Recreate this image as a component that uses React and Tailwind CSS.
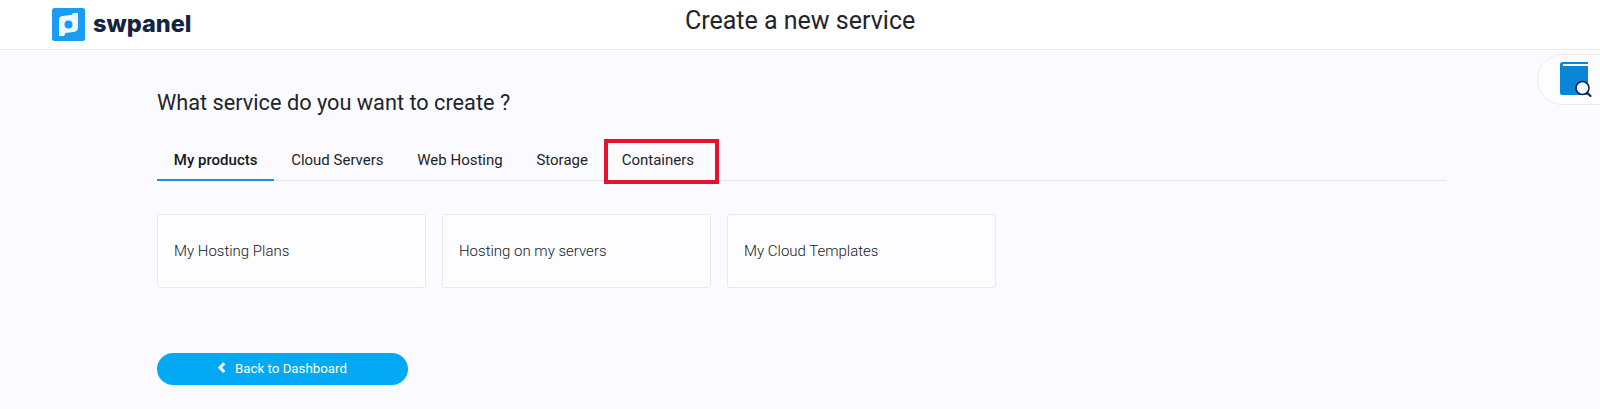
import React from "react";

const tabs = ["My products", "Cloud Servers", "Web Hosting", "Storage", "Containers"];
const cards = ["My Hosting Plans", "Hosting on my servers", "My Cloud Templates"];

const Logo = () => (
  <svg width="33" height="33" viewBox="0 0 33 33">
    <rect width="33" height="33" rx="2.5" fill="#1a9cf5" />
    <path d="M7 12 Q7 8.5 10.5 8 L20 6.8 L21 5 L26 5 L26 19 Q26 23.5 21.5 24 L13.5 25 L12 28 L8 28 Q7 28 7 26.5 Z" fill="#eef7fe" />
    <circle cx="16.5" cy="16.5" r="4" fill="#1a9cf5" />
  </svg>
);

const BookIcon = () => (
  <svg width="32" height="35" viewBox="0 0 32 35">
    <path d="M2.5 0 H28 V2 H3 V4 H28 V33 H2 Q0 33 0 31 V2.5 Q0 0 2.5 0 Z" fill="#0a86d8" />
    <circle cx="22.5" cy="26" r="6.5" fill="#f3f8fd" stroke="#10243f" strokeWidth="1.6" />
    <path d="M27.2 30.7 L30.5 34" stroke="#10243f" strokeWidth="2" strokeLinecap="round" />
  </svg>
);

export default function App() {
  return (
    <div className="w-[1600px] h-[409px] overflow-hidden relative bg-[#fbfbff] font-['Roboto',sans-serif] text-[#212529]">
      <header className="h-[50px] bg-white border-b border-[#e8e9ed] flex items-center relative">
        <div className="flex items-center gap-[8px] pl-[52px] pb-[1px]">
          <Logo />
          <span className="font-['Inter',sans-serif] font-extrabold text-[23.5px] leading-none text-[#14233f]">swpanel</span>
        </div>
        <h1 className="absolute left-[685px] top-[4px] text-[25px] leading-[34px] font-normal text-[#212529]">Create a new service</h1>
      </header>

      {/* docs widget on the right edge */}
      <div className="absolute left-[1537px] top-[54px] w-[80px] h-[51px] rounded-l-[26px] bg-[#fdfdff] border border-[#eaebef] flex items-center pl-[22px]">
        <BookIcon />
      </div>

      <main className="pl-[157px] pr-[154px]">
        <h2 className="text-[21.73px] leading-[28px] font-normal text-[#212529] mt-[39px]">What service do you want to create ?</h2>

        <div className="flex mt-[21px] border-b border-[#e3e5ea] h-[43px]">
          {tabs.map((t, i) => (
            <div
              key={t}
              className={
                "relative px-[16.85px] pt-[3px] h-[43px] flex items-center text-[15px] border-b-2 " +
                (i === 0 ? "font-medium text-[#16181b] border-[#1b95d8]" : "text-[#212529] border-transparent")
              }
            >
              {t}
              {t === "Containers" && (
                <span className="absolute left-[-1px] right-[-8px] top-[1px] h-[45px] border-[4px] border-[#e3142d]" />
              )}
            </div>
          ))}
        </div>

        <div className="flex gap-[16px] mt-[33px]">
          {cards.map((c) => (
            <div
              key={c}
              className="w-[269px] h-[74px] bg-[#fdfdff] border border-[#e8e9ee] rounded-[3px] flex items-center pl-[16px] text-[15px] font-light text-[#16181b]"
            >
              {c}
            </div>
          ))}
        </div>

        <button className="mt-[65px] w-[251px] h-[32px] rounded-full bg-[#03a9f4] text-white text-[13.3px] flex items-center justify-center gap-[9px]">
          <svg width="8" height="12" viewBox="0 0 8 12" className="mb-[2px]">
            <path d="M6.2 1.2 L2 5.6 L6.2 10" fill="none" stroke="#fff" strokeWidth="3" />
          </svg>
          Back to Dashboard
        </button>
      </main>
    </div>
  );
}
